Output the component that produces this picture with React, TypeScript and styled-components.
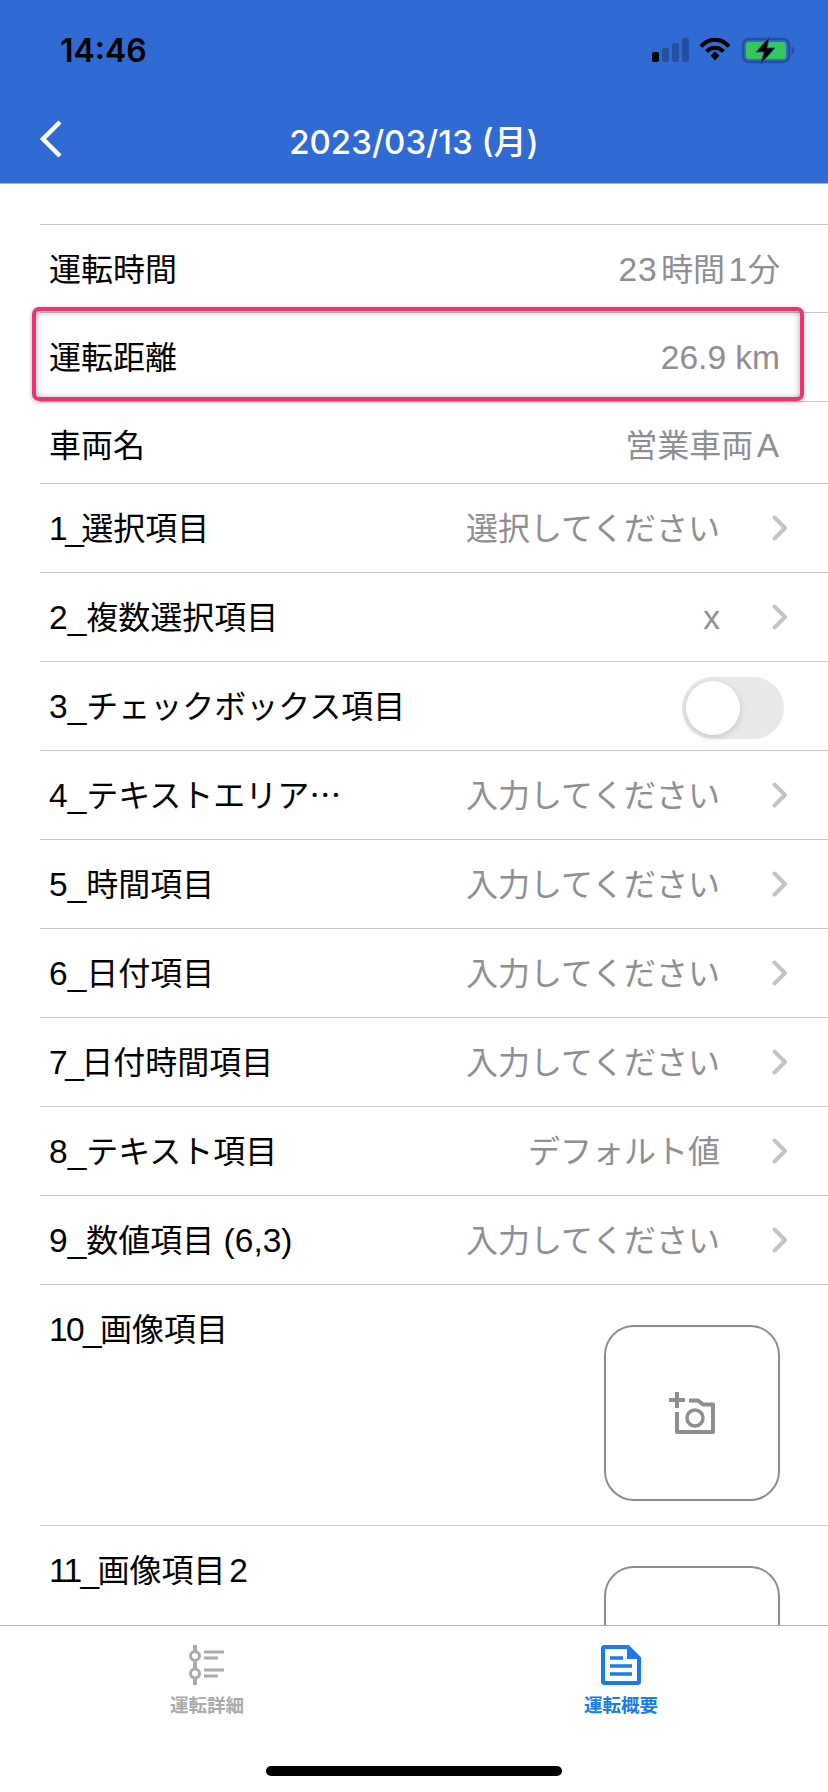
import styled, { createGlobalStyle } from "styled-components";

type RowData = { label: string; value?: string; chevron?: boolean };

const topRows: RowData[] = [{ label: "運転時間", value: "23\u200a時間\u200a1分" }];

const selectRows: RowData[] = [
  { label: "1_選択項目", value: "選択してください", chevron: true },
  { label: "2_複数選択項目", value: "x", chevron: true },
];

const inputRows: RowData[] = [
  { label: "4_テキストエリア…", value: "入力してください", chevron: true },
  { label: "5_時間項目", value: "入力してください", chevron: true },
  { label: "6_日付項目", value: "入力してください", chevron: true },
  { label: "7_日付時間項目", value: "入力してください", chevron: true },
  { label: "8_テキスト項目", value: "デフォルト値", chevron: true },
  { label: "9_数値項目 (6,3)", value: "入力してください", chevron: true },
];

// on the device "1_" and "7_" sit tighter than the other digits,
// and latin next to kanji gets a small extra gap
const kernOf = (part: string) => {
  if (/^[17]_$/.test(part)) return -2.5;
  if (/^1\d_$/.test(part)) return -1.6;
  if (part.includes("\u200a")) return 0.8;
  return 0;
};

// latin runs are set a bit larger than the kana/kanji around them, like on the device
const Mixed = ({ text }: { text: string }) => (
  <>
    {text.split(/([\u0020-\u007e\u200a]+)/).map((part, i) =>
      i % 2 === 1 ? (
        <Latin key={i} $kern={kernOf(part)}>
          {part}
        </Latin>
      ) : (
        part
      ),
    )}
  </>
);

const Chevron = () => (
  <ChevronSvg viewBox="0 0 16 26" fill="none">
    <path d="M2.500 2.500 13 13 2.500 23.500" stroke="#c4c4c7" strokeWidth="4" strokeLinecap="round" strokeLinejoin="round" />
  </ChevronSvg>
);

const CameraPlus = () => (
  <svg width="46" height="42" viewBox="0 0 46 42" fill="none">
    <path d="M0 8h16M8 0v16" stroke="#8e8e92" strokeWidth="4" />
    <path d="M8 20v20h36V12.500H34l-5-4H20" stroke="#8e8e92" strokeWidth="4" strokeLinejoin="round" />
    <circle cx="26" cy="26" r="8" stroke="#8e8e92" strokeWidth="3.500" />
  </svg>
);

const Row = ({ label, value, chevron }: RowData) => (
  <RowWrapper>
    <Label>
      <Mixed text={label} />
    </Label>
    <Value>
      <Mixed text={value ?? ""} />
    </Value>
    {chevron && <Chevron />}
  </RowWrapper>
);

const App = () => {
  return (
    <Screen>
      <GlobalStyle />
      <Header>
        <StatusBar>
          <Time>14:46</Time>
          <StatusIcons>
            <svg width="37" height="24" viewBox="0 0 37 24">
              <rect x="0" y="14" width="7" height="10" rx="2" fill="#000" />
              <rect x="10" y="10" width="7" height="14" rx="2" fill="#24509f" />
              <rect x="20" y="5" width="7" height="19" rx="2" fill="#24509f" />
              <rect x="30" y="0" width="7" height="24" rx="2" fill="#24509f" />
            </svg>
            <svg width="32" height="24" viewBox="0 0 32 24" fill="none">
              <path d="M2 8.500C10-.5 22-.5 30 8.500" stroke="#000" strokeWidth="4" />
              <path d="M7.500 13.500c5-5 12-5 17 0" stroke="#000" strokeWidth="4" />
              <path d="M11.500 17.500 16 13.500l4.500 4-4.500 5z" fill="#000" />
            </svg>
            <svg width="54" height="27" viewBox="0 0 54 27" fill="none">
              <rect x="2" y="2" width="46" height="23" rx="6" stroke="#24509f" strokeWidth="2.500" />
              <rect x="5" y="5" width="40" height="17" rx="3" fill="#34c759" />
              <path d="M50.500 9.500c2 .5 3 2 3 4s-1 3.500-3 4z" fill="#24509f" />
              <path d="M28.500 0 15 15h8L19.500 27 34 11h-8z" fill="#000" stroke="#24509f" strokeWidth="1" />
            </svg>
          </StatusIcons>
        </StatusBar>
        <NavBar>
          <BackIcon viewBox="0 0 24 40" fill="none">
            <path d="M21 3 4 20l17 17" stroke="#fff" strokeWidth="4.500" />
          </BackIcon>
          <Title>2023/03/13 (月)</Title>
        </NavBar>
      </Header>

      <Content>
        {topRows.map((row) => (
          <Row key={row.label} {...row} />
        ))}
        <Highlighted>
          <Row label="運転距離" value="26.9 km" />
          <Highlight />
        </Highlighted>
        <ShortRow>
          <Label>車両名</Label>
          <Value>
            <Mixed text={"営業車両\u200aA"} />
          </Value>
        </ShortRow>
        {selectRows.map((row) => (
          <Row key={row.label} {...row} />
        ))}
        <RowWrapper>
          <Label>
            <Mixed text="3_チェックボックス項目" />
          </Label>
          <Toggle>
            <Knob />
          </Toggle>
        </RowWrapper>
        {inputRows.map((row) => (
          <Row key={row.label} {...row} />
        ))}
        <ImageRow>
          <ImageLabel>
            <Mixed text="10_画像項目" />
          </ImageLabel>
          <ImageBox>
            <CameraPlus />
          </ImageBox>
        </ImageRow>
        <ImageRow>
          <ImageLabel>
            <Mixed text={"11_画像項目\u200a2"} />
          </ImageLabel>
          <ImageBox>
            <CameraPlus />
          </ImageBox>
        </ImageRow>
      </Content>

      <TabBar>
        <Tab>
          <TabIcon viewBox="0 0 40 40" fill="none">
            <path d="M8 0v7M8 17v6M8 33v7" stroke="#aaa" strokeWidth="4" />
            <circle cx="8" cy="11" r="4.500" stroke="#aaa" strokeWidth="3" />
            <circle cx="8" cy="28.500" r="4.500" stroke="#aaa" strokeWidth="3" />
            <path d="M17 7h20M17 13h14M17 25h20M17 31h14" stroke="#aaa" strokeWidth="3" />
          </TabIcon>
          <TabLabel>運転詳細</TabLabel>
        </Tab>
        <Tab>
          <TabIcon viewBox="0 0 40 40" fill="none">
            <path d="M2 3.500A1.500 1.500 0 0 1 3.500 2H27l11 11v23.500a1.500 1.500 0 0 1-1.500 1.500h-33A1.500 1.500 0 0 1 2 36.500z" stroke="#1a7ce8" strokeWidth="4" />
            <path d="M26 1h2l11 11v2H26z" fill="#1a7ce8" />
            <path d="M9 13h13M9 21h22M9 29h22" stroke="#1a7ce8" strokeWidth="3.500" />
          </TabIcon>
          <TabLabel $active>運転概要</TabLabel>
        </Tab>
        <HomeIndicator />
      </TabBar>
    </Screen>
  );
};

const GlobalStyle = createGlobalStyle`
  html, body {
    margin: 0;
    padding: 0;
    background: #fff;
  }

  body {
    font-family: "Noto Sans CJK JP", "Liberation Sans", sans-serif;
  }
`;

const Screen = styled.div`
  width: 828px;
  height: 1792px;
  display: flex;
  flex-direction: column;
  overflow: hidden;
  background: #fff;
`;

const Header = styled.header`
  flex: none;
  height: 184px;
  box-sizing: border-box;
  background: #306bd4;
  border-bottom: 1px solid #9db5e0;
  color: #fff;
`;

const StatusBar = styled.div`
  height: 100px;
  box-sizing: border-box;
  padding: 0 33px 0 60px;
  display: flex;
  align-items: center;
  justify-content: space-between;
`;

const Time = styled.span`
  color: #000;
  font-family: "Inter", sans-serif;
  font-size: 32px;
  font-weight: 600;
`;

const StatusIcons = styled.div`
  display: flex;
  align-items: center;
  gap: 10px;
`;

const NavBar = styled.div`
  height: 83px;
  position: relative;
  display: flex;
  align-items: center;
  justify-content: center;
`;

const BackIcon = styled.svg`
  position: absolute;
  left: 39px;
  top: 19px;
  width: 24px;
  height: 40px;
`;

const Title = styled.h1`
  margin: 0 0 4px;
  font-family: "Inter", "Noto Sans CJK JP", sans-serif;
  font-size: 33px;
  font-weight: 500;
`;

const Latin = styled.span<{ $kern: number }>`
  font-family: "Liberation Sans", sans-serif;
  font-size: 33.500px;
  letter-spacing: ${({ $kern }) => $kern}px;
`;

const Content = styled.main`
  flex: 1;
  min-height: 0;
  overflow: hidden;
  padding-top: 40px;
  padding-left: 40px;

  & > *:first-child {
    border-top: 1px solid #c8c7cc;
  }
`;

const RowWrapper = styled.div`
  height: 89px;
  box-sizing: border-box;
  padding: 0 40px 4px 0;
  border-bottom: 1px solid #c8c7cc;
  display: flex;
  align-items: center;
  font-size: 32px;
`;

const ShortRow = styled(RowWrapper)`
  height: 82px;
  padding: 0 40px 0 0;
`;

const Label = styled.span`
  flex: 1;
  padding-left: 9px;
  color: #000;
  white-space: nowrap;
`;

const Value = styled.span`
  padding-right: 8px;
  color: #8e8e93;
  white-space: nowrap;
`;

const ChevronSvg = styled.svg`
  width: 16px;
  height: 26px;
  margin: 4px 0 0 44px;
`;

const Highlighted = styled.div`
  position: relative;
`;

const Highlight = styled.div`
  position: absolute;
  left: -8px;
  right: 24px;
  top: -6px;
  bottom: 1px;
  border: 4px solid #f0326e;
  border-radius: 7px;
  box-shadow:
    0 1px 4px rgba(0, 0, 0, 0.3),
    inset 0 1px 6px rgba(0, 0, 0, 0.35);
`;

const Toggle = styled.div`
  margin: 7px 4px 0 auto;
  width: 102px;
  height: 62px;
  border-radius: 31px;
  background: #e9e9eb;
  padding: 4px;
  box-sizing: border-box;
`;

const Knob = styled.div`
  width: 54px;
  height: 54px;
  border-radius: 50%;
  background: #fff;
  box-shadow: 0 2px 7px rgba(0, 0, 0, 0.16);
`;

const ImageRow = styled.div`
  height: 241px;
  box-sizing: border-box;
  padding: 20px 48px 0 0;
  border-bottom: 1px solid #c8c7cc;
  display: flex;
  justify-content: space-between;
  align-items: flex-start;
  font-size: 32px;
`;

const ImageLabel = styled.span`
  padding-left: 9px;
  line-height: 44px;
  color: #000;
`;

const ImageBox = styled.div`
  width: 176px;
  height: 176px;
  margin-top: 20px;
  box-sizing: border-box;
  border: 2px solid #8e8e92;
  border-radius: 30px;
  display: flex;
  align-items: center;
  justify-content: center;
  background: #fff;
`;

const TabBar = styled.nav`
  flex: none;
  height: 167px;
  box-sizing: border-box;
  position: relative;
  display: grid;
  grid-template-columns: 1fr 1fr;
  align-items: start;
  border-top: 1px solid #b3b3b3;
  padding-top: 19px;
  background: #fff;
`;

const Tab = styled.div`
  display: flex;
  flex-direction: column;
  align-items: center;
`;

const TabIcon = styled.svg`
  width: 40px;
  height: 40px;
`;

const TabLabel = styled.span<{ $active?: boolean }>`
  margin-top: 6px;
  font-size: 18.500px;
  font-weight: 700;
  color: ${({ $active }) => ($active ? "#1a7ce8" : "#aaaaaa")};
`;

const HomeIndicator = styled.div`
  position: absolute;
  left: 266px;
  bottom: 16px;
  width: 296px;
  height: 10px;
  border-radius: 5px;
  background: #000;
`;

export default App;
